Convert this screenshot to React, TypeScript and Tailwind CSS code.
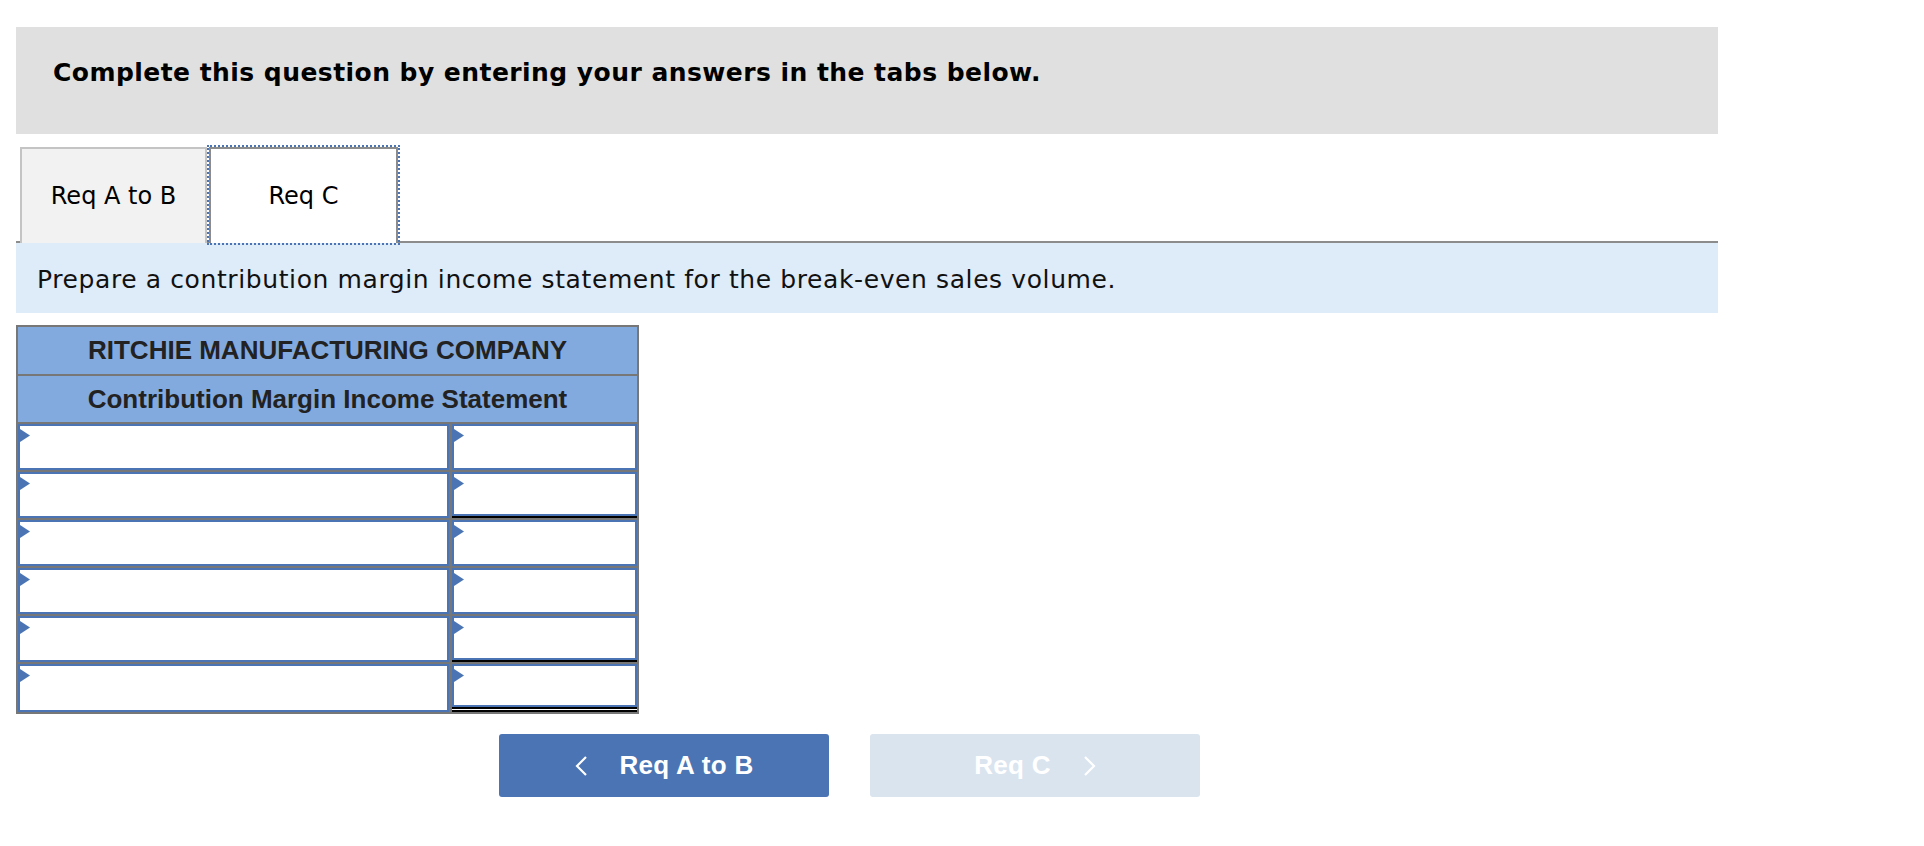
import React from 'react';

const verdana = { fontFamily: '"DejaVu Sans", Verdana, sans-serif' };

const Triangle = () => (
  <svg className="absolute left-0 top-[3px]" width="10" height="13" viewBox="0 0 10 13">
    <polygon points="0,0 10,6.5 0,13" fill="#4a74b4" />
  </svg>
);

const InputCell = ({ under }: { under?: 'single' | 'double' }) => {
  let wrap = 'bg-white';
  if (under === 'single') wrap = 'bg-white border-b-2 border-black';
  if (under === 'double') wrap = 'bg-white border-b-[5px] border-double border-black';
  return (
    <div className={wrap}>
      <div className="relative h-full border-2 border-[#4a74b4] bg-white">
        <Triangle />
      </div>
    </div>
  );
};

const rows: { under?: 'single' | 'double'; h: string }[] = [
  { h: 'h-[46px]' },
  { h: 'h-[46px]', under: 'single' },
  { h: 'h-[46px]' },
  { h: 'h-[46px]' },
  { h: 'h-[46px]', under: 'single' },
  { h: 'h-[48px]', under: 'double' },
];

const App = () => {
  return (
    <div className="min-h-[846px] w-[1924px] bg-white pl-4 pt-[27px]">
      <div className="w-[1702px]">
        {/* instructions bar */}
        <div className="h-[107px] bg-[#e0e0e0] pl-[37px] pt-[27px]" style={verdana}>
          <p className="text-[25px] font-bold tracking-[0.45px] text-black">Complete this question by entering your answers in the tabs below.</p>
        </div>

        {/* tabs */}
        <div className="mt-[13px] flex border-b-2 border-[#8c8c8c] pl-1" style={verdana}>
          <button className="-mb-[2px] flex h-[96px] w-[187px] items-center justify-center border-2 border-b-0 border-[#c4c4c4] bg-[#f2f2f2] text-[24px] text-black">
            Req A to B
          </button>
          <button className="-mb-[2px] ml-[2px] flex h-[96px] w-[189px] items-center justify-center border-2 border-b-0 border-[#8c8c8c] bg-white text-[24px] text-black outline-2 outline-dotted outline-[#4a74b4]">
            Req C
          </button>
        </div>

        {/* prompt */}
        <div className="flex h-[70px] items-center bg-[#deebf8] pl-[21px] pt-[3px]" style={verdana}>
          <p className="text-[25px] tracking-[0.6px] text-[#111]">Prepare a contribution margin income statement for the break-even sales volume.</p>
        </div>

        {/* statement table */}
        <div className="mt-3 flex w-[623px] flex-col gap-[2px] border-2 border-[#777] bg-[#777] font-['Liberation_Sans',Arial,sans-serif]">
          <div className="flex h-[47px] items-center justify-center bg-[#82aadf] text-[26px] font-bold text-[#222]">
            RITCHIE MANUFACTURING COMPANY
          </div>
          <div className="flex h-[46px] items-center justify-center bg-[#82aadf] text-[26px] font-bold text-[#222]">
            Contribution Margin Income Statement
          </div>
          {rows.map((r, i) => (
            <div key={i} className={`grid grid-cols-[431px_1fr] gap-x-[3px] ${r.h}`}>
              <InputCell />
              <InputCell under={r.under} />
            </div>
          ))}
        </div>

        {/* navigation */}
        <div className="mt-[20px] flex gap-[41px] pl-[483px] font-['Liberation_Sans',Arial,sans-serif]">
          <button className="flex h-[63px] w-[330px] items-center justify-center gap-[32px] rounded-[3px] bg-[#4a74b4] text-[26px] font-bold tracking-[0.3px] text-white">
            <svg width="13" height="20" viewBox="0 0 13 20">
              <polyline points="11,1 2,10 11,19" fill="none" stroke="white" strokeWidth="2.2" />
            </svg>
            <span>Req A to B</span>
          </button>
          <button className="flex h-[63px] w-[330px] items-center justify-center gap-[32px] rounded-[3px] bg-[#dae4ef] text-[26px] font-bold tracking-[0.3px] text-white">
            <span>Req C</span>
            <svg width="13" height="20" viewBox="0 0 13 20">
              <polyline points="2,1 11,10 2,19" fill="none" stroke="white" strokeWidth="2.2" />
            </svg>
          </button>
        </div>
      </div>
    </div>
  );
};

export default App;
